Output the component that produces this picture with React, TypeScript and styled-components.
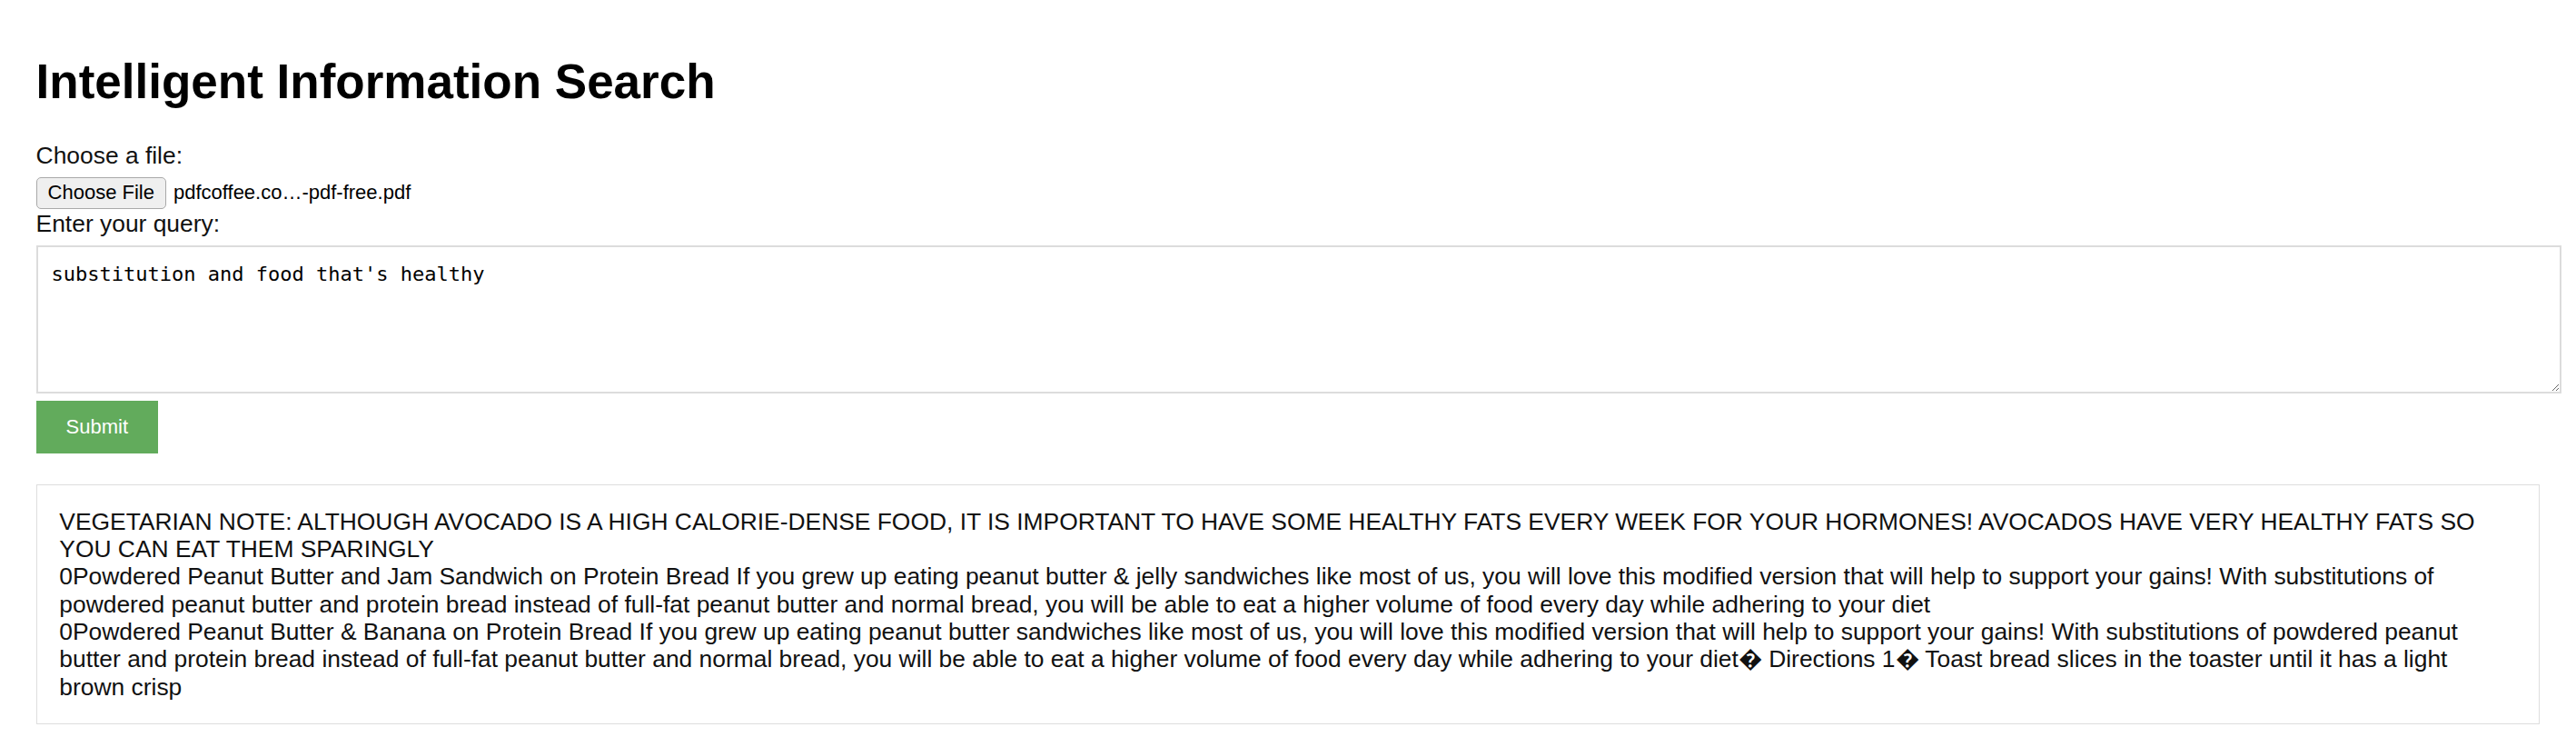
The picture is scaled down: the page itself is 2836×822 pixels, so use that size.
import React from 'react';
import styled, { createGlobalStyle } from 'styled-components';

const GlobalStyle = createGlobalStyle`
  html, body {
    margin: 0;
    padding: 0;
    background: #ffffff;
  }
  body {
    font-family: "Liberation Sans", Arial, Helvetica, sans-serif;
    color: #111111;
  }
`;

const Page = styled.div`
  display: flex;
  flex-direction: column;
  align-items: flex-start;
  padding: 59px 39.6px 0;
`;

const Title = styled.h1`
  margin: 0 0 35.7px;
  font-size: 53px;
  line-height: 61px;
  font-weight: 700;
  color: #000000;
`;

const FieldLabel = styled.label<{ $gap?: number }>`
  display: block;
  margin-top: ${(p) => p.$gap ?? 0}px;
  font-size: 26.4px;
  line-height: 30.3px;
`;

const FileRow = styled.div`
  display: flex;
  align-items: center;
  gap: 8px;
  height: 35px;
  margin-top: 9px;
`;

const FileButton = styled.button`
  box-sizing: border-box;
  height: 35px;
  padding: 0 12px;
  font-family: "Liberation Sans", Arial, sans-serif;
  font-size: 22px;
  color: #000000;
  background: #efefef;
  border: 1.65px solid #a9a9a9;
  border-radius: 5px;
`;

const FileName = styled.span`
  font-size: 22px;
  color: #000000;
`;

const QueryInput = styled.textarea`
  box-sizing: border-box;
  width: calc(100% + 24px);
  height: 163px;
  margin: 9px 0 0;
  padding: 17px 15px;
  font-family: "DejaVu Sans Mono", "Liberation Mono", monospace;
  font-size: 22px;
  color: #000000;
  border: 2px solid #dcdcdc;
  border-radius: 0;
  resize: vertical;
  outline: none;
`;

const SubmitButton = styled.button`
  height: 58px;
  margin-top: 8px;
  padding: 0 33px;
  font-family: "Liberation Sans", Arial, sans-serif;
  font-size: 22px;
  color: #ffffff;
  background: #62ab5c;
  border: none;
  cursor: pointer;
`;

const ResultBox = styled.div`
  box-sizing: border-box;
  width: 100%;
  margin-top: 34px;
  padding: 24.75px;
  border: 1.65px solid #dedede;
`;

const ResultLine = styled.p`
  margin: 0;
  font-size: 26.4px;
  line-height: 30.3px;
  color: #111111;
`;

const results = [
  'VEGETARIAN NOTE: ALTHOUGH AVOCADO IS A HIGH CALORIE-DENSE FOOD, IT IS IMPORTANT TO HAVE SOME HEALTHY FATS EVERY WEEK FOR YOUR HORMONES! AVOCADOS HAVE VERY HEALTHY FATS SO YOU CAN EAT THEM SPARINGLY',
  '0Powdered Peanut Butter and Jam Sandwich on Protein Bread If you grew up eating peanut butter & jelly sandwiches like most of us, you will love this modified version that will help to support your gains! With substitutions of powdered peanut butter and protein bread instead of full-fat peanut butter and normal bread, you will be able to eat a higher volume of food every day while adhering to your diet',
  '0Powdered Peanut Butter & Banana on Protein Bread If you grew up eating peanut butter sandwiches like most of us, you will love this modified version that will help to support your gains! With substitutions of powdered peanut butter and protein bread instead of full-fat peanut butter and normal bread, you will be able to eat a higher volume of food every day while adhering to your diet\uFFFD Directions 1\uFFFD Toast bread slices in the toaster until it has a light brown crisp',
];

export default function App() {
  return (
    <Page>
      <GlobalStyle />
      <Title>Intelligent Information Search</Title>

      <FieldLabel htmlFor="file">Choose a file:</FieldLabel>
      <FileRow>
        <FileButton id="file" type="button">Choose File</FileButton>
        <FileName>pdfcoffee.co…-pdf-free.pdf</FileName>
      </FileRow>

      <FieldLabel htmlFor="query" $gap={0.7}>Enter your query:</FieldLabel>
      <QueryInput id="query" defaultValue="substitution and food that's healthy" />
      <SubmitButton type="button">Submit</SubmitButton>

      <ResultBox>
        {results.map((text, i) => (
          <ResultLine key={i}>{text}</ResultLine>
        ))}
      </ResultBox>
    </Page>
  );
}
